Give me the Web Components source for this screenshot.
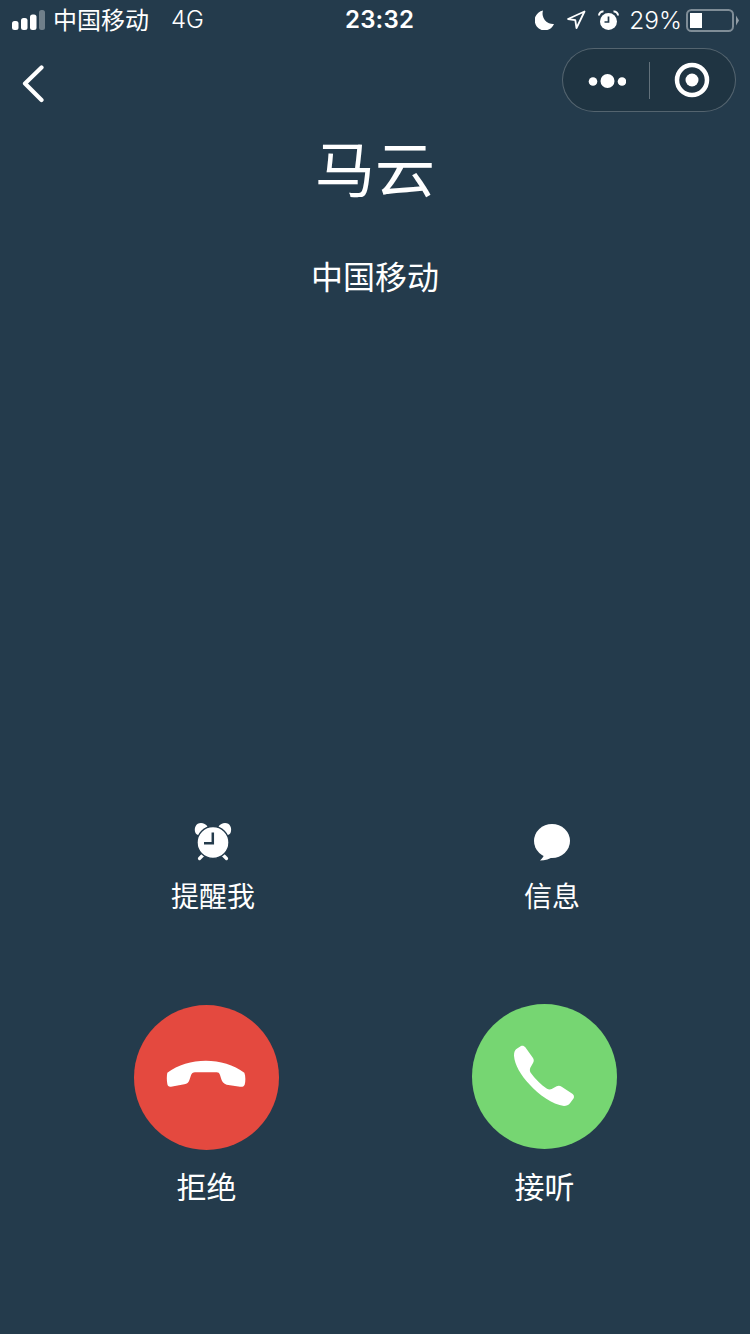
<!DOCTYPE html>
<html lang="zh">
<head>
<meta charset="utf-8">
<title>来电</title>
<style>
	html, body { margin: 0; padding: 0; background: #243b4c; }
	body { font-family: "Inter", "Noto Sans CJK SC", sans-serif; color: #fff; }
</style>
</head>
<body>
<call-screen></call-screen>
<script>
const CJK = `"Noto Sans CJK SC", sans-serif`;

class StatusBar extends HTMLElement {
	constructor() {
		super();
		this.attachShadow({ mode: "open" });
		this.shadowRoot.innerHTML = `
			<style>
				:host { display: grid; grid-template-columns: 333px auto 1fr; align-items: center; height: 40px; box-sizing: border-box; padding-left: 12px; color: #fff; font-family: "Inter", ${CJK}; }
				.left, .right { display: flex; align-items: center; }
				.right { justify-content: flex-end; padding-right: 11px; }
				.signal { display: block; margin-right: 8px; }
				.carrier { font: 400 24px/40px ${CJK}; width: 118px; white-space: nowrap; margin-top: -2px; }
				.net { font-size: 24px; font-weight: 350; line-height: 40px; }
				.time { font-size: 24px; font-weight: 600; line-height: 40px; letter-spacing: .2px; }
				.pct { font-size: 24.5px; font-weight: 350; line-height: 40px; margin: 0 4px 0 10px; }
				svg { display: block; }
			</style>
			<div class="left">
				<svg class="signal" width="33" height="20" viewBox="0 0 33 20">
					<rect x="0" y="11" width="6.5" height="9" rx="2.5" fill="#fff"/>
					<rect x="9" y="8" width="6.5" height="12" rx="2.5" fill="#fff"/>
					<rect x="18" y="4.5" width="6.5" height="15.5" rx="2.5" fill="#fff"/>
					<rect x="27" y="0" width="6" height="20" rx="2.5" fill="#fff" fill-opacity=".35"/>
				</svg>
				<span class="carrier">中国移动</span>
				<span class="net">4G</span>
			</div>
			<div class="time">23:32</div>
			<div class="right">
				<svg width="19" height="20" viewBox="0 0 19 20" style="margin-right:12px"><path d="M8 0.5 A10 10 0 1 0 19 14 A10.5 10.5 0 0 1 8 0.5Z" fill="#fff"/></svg>
				<svg width="20" height="20" viewBox="0 0 20 20" style="margin-right:12px"><path d="M18.5 1.5 L2 9 L9.3 10.2 L10.5 18 Z" fill="none" stroke="#fff" stroke-width="1.8" stroke-linejoin="round"/></svg>
				<svg width="21" height="21" viewBox="0 0 21 21"><circle cx="10.5" cy="11.5" r="8.5" fill="#fff"/><path d="M1 5.5 A4 4 0 0 1 5.5 1.5M20 5.5 A4 4 0 0 0 15.5 1.5" stroke="#fff" stroke-width="2" fill="none"/><path d="M10.5 6.5 V12 H6.5" stroke="#243b4c" stroke-width="1.7" fill="none"/></svg>
				<span class="pct">29%</span>
				<svg width="53" height="23" viewBox="0 0 53 23">
					<rect x="1" y="1" width="46" height="21" rx="4.5" fill="none" stroke="#fff" stroke-opacity=".42" stroke-width="2"/>
					<rect x="4" y="4" width="12" height="15" fill="#fff"/>
					<path d="M50 6.5 L53 11.5 L50 16.5 Z" fill="#fff" fill-opacity=".5"/>
				</svg>
			</div>
		`;
	}
}

class NavBar extends HTMLElement {
	constructor() {
		super();
		this.attachShadow({ mode: "open" });
		this.shadowRoot.innerHTML = `
			<style>
				:host { display: flex; justify-content: space-between; align-items: flex-start; box-sizing: border-box; height: 72px; padding: 8px 14px 0 22px; }
				.back { display: block; margin-top: 17px; }
				.capsule { display: flex; align-items: center; box-sizing: border-box; width: 174px; height: 64px; border-radius: 32px; background: #1f3442; border: 1.5px solid rgba(255, 255, 255, .24); }
				.part { flex: 1; display: flex; align-items: center; justify-content: center; }
				.divider { width: 1px; height: 37px; background: rgba(255, 255, 255, .3); }
			</style>
			<svg class="back" width="24" height="38" viewBox="0 0 24 38"><path d="M19.500 2.500 L3 18.500 L19.500 35" fill="none" stroke="#fff" stroke-width="4.200" stroke-linecap="round" stroke-linejoin="round"/></svg>
			<div class="capsule">
				<div class="part"><svg width="40" height="18" viewBox="0 0 40 18"><circle cx="7" cy="10.500" r="4.300" fill="#fff"/><circle cx="21.500" cy="10" r="7" fill="#fff"/><circle cx="36" cy="10.500" r="4.300" fill="#fff"/></svg></div>
				<div class="divider"></div>
				<div class="part"><svg width="36" height="36" viewBox="0 0 36 36"><circle cx="18" cy="18" r="15" fill="none" stroke="#fff" stroke-width="4.5"/><circle cx="18" cy="18" r="6.500" fill="#fff"/></svg></div>
			</div>
		`;
	}
}

class CallerInfo extends HTMLElement {
	constructor() {
		super();
		this.attachShadow({ mode: "open" });
		this.shadowRoot.innerHTML = `
			<style>
				:host { display: flex; flex-direction: column; align-items: center; font-family: ${CJK}; color: #fff; }
				.name { font-size: 60px; line-height: 88px; font-weight: 400; margin-top: 10px; }
				.sub { font-size: 32px; line-height: 46px; font-weight: 400; margin-top: 42px; }
			</style>
			<div class="name"><slot name="name"></slot></div>
			<div class="sub"><slot name="sub"></slot></div>
		`;
	}
}

class SmallAction extends HTMLElement {
	constructor() {
		super();
		this.attachShadow({ mode: "open" });
		this.shadowRoot.innerHTML = `
			<style>
				:host { display: flex; flex-direction: column; align-items: center; width: 200px; color: #fff; font: 400 28px/40px ${CJK}; }
				.icon { height: 40px; margin-bottom: 13px; }
				::slotted(svg) { display: block; }
			</style>
			<div class="icon"><slot name="icon"></slot></div>
			<slot></slot>
		`;
	}
}

class RoundAction extends HTMLElement {
	constructor() {
		super();
		this.attachShadow({ mode: "open" });
		this.shadowRoot.innerHTML = `
			<style>
				:host { display: flex; flex-direction: column; align-items: center; width: 145px; color: #fff; font: 400 30px/44px ${CJK}; }
				.circle { width: 145px; height: 145px; border-radius: 50%; background: var(--tone); margin-bottom: var(--label-gap, 13px); }
				::slotted(svg) { display: block; }
			</style>
			<div class="circle"><slot name="icon"></slot></div>
			<slot></slot>
		`;
	}
}

class CallScreen extends HTMLElement {
	constructor() {
		super();
		this.attachShadow({ mode: "open" });
		this.shadowRoot.innerHTML = `
			<style>
				:host { display: flex; flex-direction: column; width: 750px; height: 1334px; overflow: hidden; background: #243b4c; }
				.spacer { flex: 1; }
				.small { display: flex; padding-left: 113px; gap: 139px; }
				.round { display: flex; align-items: flex-start; padding: 90px 0 127px 134px; gap: 193px; }
				.answer { margin-top: -1px; --label-gap: 14px; }
			</style>
			<status-bar></status-bar>
			<nav-bar></nav-bar>
			<caller-info>
				<span slot="name">马云</span>
				<span slot="sub">中国移动</span>
			</caller-info>
			<div class="spacer"></div>
			<div class="small">
				<small-action>
					<svg slot="icon" width="40" height="40" viewBox="0 0 40 40">
						<path d="M2.500 11 C0.500 6 3 1 8 1 C10.500 1 13 2.500 14.500 4.500 L6 13 C4.500 13 3.500 12.500 2.500 11Z M37.500 11 C39.500 6 37 1 32 1 C29.500 1 27 2.500 25.500 4.500 L34 13 C35.500 13 36.500 12.500 37.500 11Z" fill="#fff"/>
						<path d="M10 33 L6.500 36.500 M30 33 L33.500 36.500" stroke="#fff" stroke-width="3.200" stroke-linecap="round"/>
						<circle cx="20" cy="20.500" r="16" fill="#fff" stroke="#243b4c" stroke-width="1.400"/>
						<path d="M19.800 10.500 V21.300 H11" fill="none" stroke="#243b4c" stroke-width="2.500"/>
					</svg>
					提醒我
				</small-action>
				<small-action>
					<svg slot="icon" width="40" height="40" viewBox="0 0 40 40">
						<ellipse cx="20" cy="19" rx="18" ry="17" fill="#fff"/>
						<path d="M13 31 C12 34 10 37 8 38.500 C13 38.500 18 37 22 34 Z" fill="#fff"/>
					</svg>
					信息
				</small-action>
			</div>
			<div class="round">
				<round-action style="--tone:#e4493f">
					<svg slot="icon" width="145" height="145" viewBox="27 15 435 435">
						<path fill="#fff" d="M127 218 C190 170 295 170 358 218 C362 228 362 245 359 254 C356 260 351 261 345 260 L305 254 C296 252 291 245 289 238 L285 225 C283 219 280 217 275 217 L210 217 C204 217 200 220 198 226 L193 241 C191 248 186 252 178 253 L138 260 C132 261 128 258 127 252 C125 240 125 228 127 218 Z"/>
					</svg>
					拒绝
				</round-action>
				<round-action class="answer" style="--tone:#76d672">
					<svg slot="icon" width="145" height="145" viewBox="21 12 435 435">
						<path fill="#fff" d="M153 148 L168 138 C173 136 178 138 181 142 L204 174 C207 179 207 184 204 189 L196 203 C194 208 194 213 197 218 C210 236 228 254 246 266 C251 269 256 269 260 267 L275 259 C280 256 285 257 290 260 L322 281 C327 284 328 290 326 295 L315 310 C311 316 304 318 297 318 C262 314 222 285 193 253 C167 224 149 195 147 167 C147 158 149 152 153 148 Z"/>
					</svg>
					接听
				</round-action>
			</div>
		`;
	}
}

customElements.define("status-bar", StatusBar);
customElements.define("nav-bar", NavBar);
customElements.define("caller-info", CallerInfo);
customElements.define("small-action", SmallAction);
customElements.define("round-action", RoundAction);
customElements.define("call-screen", CallScreen);
</script>
</body>
</html>
